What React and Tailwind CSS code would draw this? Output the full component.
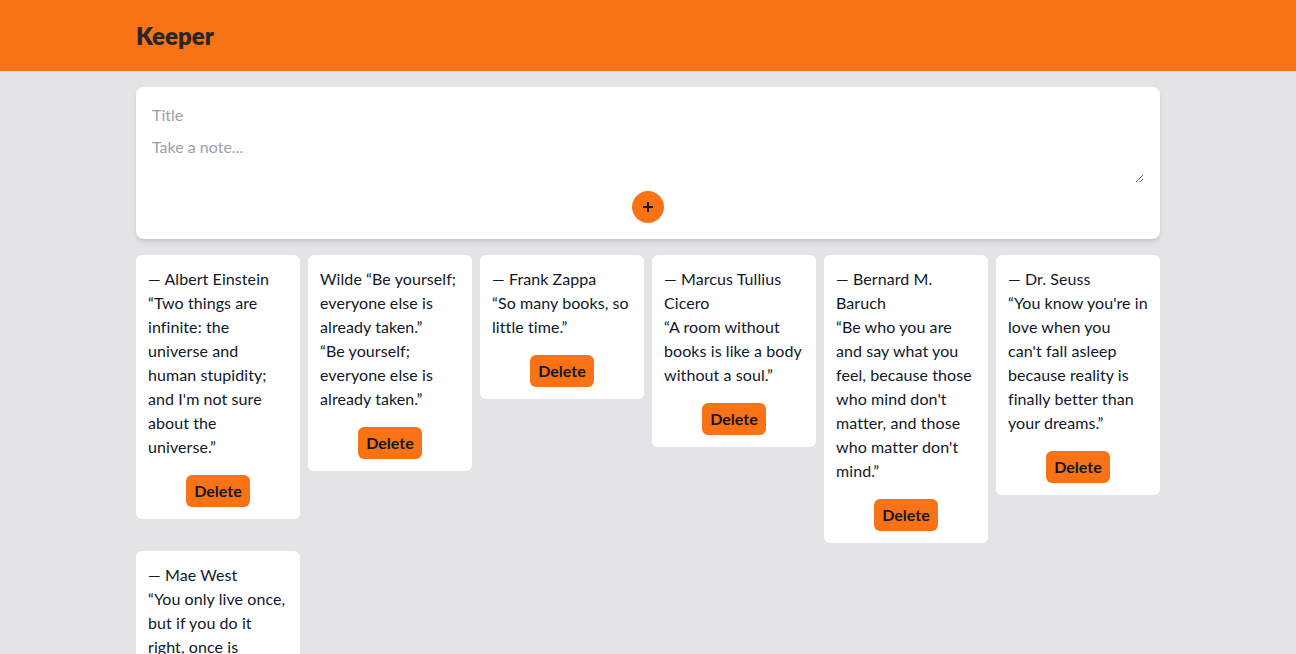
import React from 'react';

const notes = [
  { id: 1, lines: ['— Albert Einstein', '“Two things are infinite: the universe and human stupidity; and I\'m not sure about the universe.”'] },
  { id: 2, lines: ['Wilde “Be yourself; everyone else is already taken.”', '“Be yourself; everyone else is already taken.”'] },
  { id: 3, lines: ['— Frank Zappa', '“So many books, so little time.”'] },
  { id: 4, lines: ['— Marcus Tullius Cicero', '“A room without books is like a body without a soul.”'] },
  { id: 5, lines: ['— Bernard M. Baruch', '“Be who you are and say what you feel, because those who mind don\'t matter, and those who matter don\'t mind.”'] },
  { id: 6, lines: ['— Dr. Seuss', '“You know you\'re in love when you can\'t fall asleep because reality is finally better than your dreams.”'] },
  { id: 7, lines: ['— Mae West', '“You only live once, but if you do it right, once is enough.”'] },
];

const App = () => {
  return (
    <div className="min-h-screen bg-[#e4e4e7] font-['Lato',sans-serif] text-gray-900">
      <header className="bg-[#f97316] h-[71px] flex items-center">
        <div className="max-w-5xl w-full mx-auto">
          <h1 className="text-2xl font-extrabold text-[#262626]">Keeper</h1>
        </div>
      </header>

      <main className="max-w-5xl mx-auto pt-4 pb-8 space-y-4">
        <form className="bg-white rounded-lg shadow-md p-4 flex flex-col" onSubmit={(e) => e.preventDefault()}>
          <input
            type="text"
            placeholder="Title"
            className="w-full h-6 outline-none text-base placeholder:text-gray-400"
          />
          <textarea
            rows={2}
            placeholder="Take a note..."
            className="w-full mt-2 h-12 outline-none text-base leading-6 placeholder:text-gray-400"
          />
          <button
            type="submit"
            className="mt-2 self-center w-8 h-8 rounded-full bg-[#f97316] flex items-center justify-center text-gray-900"
          >
            <svg width="12" height="12" viewBox="0 0 12 12">
              <path d="M6 1v10M1 6h10" stroke="currentColor" strokeWidth="2" />
            </svg>
          </button>
        </form>

        <div className="grid grid-cols-6 gap-2 items-start">
          {notes.map((note) => (
            <div key={note.id} className="bg-white rounded-md p-3 text-base leading-6 tracking-[0.08px]">
              {note.lines.map((line, i) => (
                <p key={i}>{line}</p>
              ))}
              <div className="flex justify-center mt-4">
                <button className="bg-[#f97316] rounded-md px-2 py-1 font-bold tracking-normal text-gray-900">Delete</button>
              </div>
            </div>
          ))}
        </div>
      </main>
    </div>
  );
};

export default App;
